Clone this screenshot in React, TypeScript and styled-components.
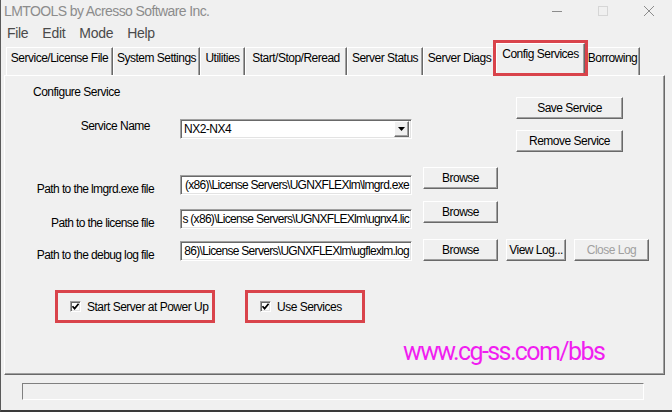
import styled, { createGlobalStyle, css } from "styled-components";

const GlobalStyle = createGlobalStyle`
  html, body {
    margin: 0;
    padding: 0;
    background: #f0f0f0;
  }
  body {
    font-family: "Liberation Sans", Arial, sans-serif;
    font-size: 12px;
    letter-spacing: -0.5px;
    color: #000;
  }
`;

const tabs = [
  { label: "Service/License File", width: 107 },
  { label: "System Settings", width: 87 },
  { label: "Utilities", width: 45 },
  { label: "Start/Stop/Reread", width: 102 },
  { label: "Server Status", width: 76 },
  { label: "Server Diags", width: 73 },
  { label: "Config Services", width: 89, active: true },
  { label: "Borrowing", width: 55 },
];

// path fields are scrolled to their end, so only the tail of each path shows
const paths = [
  {
    label: "Path to the lmgrd.exe file",
    value: "(x86)\\License Servers\\UGNXFLEXlm\\lmgrd.exe",
    space: 15,
    drop: 8,
    logButtons: false,
  },
  {
    label: "Path to the license file",
    value: "s (x86)\\License Servers\\UGNXFLEXlm\\ugnx4.lic",
    space: 5,
    drop: 8,
    logButtons: false,
  },
  {
    label: "Path to the debug log file",
    value: "86)\\License Servers\\UGNXFLEXlm\\ugflexlm.log",
    space: 9,
    drop: 2,
    logButtons: true,
  },
];

const raised = css`
  box-sizing: border-box;
  background: #f0f0f0;
  border-top: 1px solid #fff;
  border-left: 1px solid #fff;
  border-right: 1px solid #696969;
  border-bottom: 1px solid #696969;
  box-shadow: inset -1px -1px #a0a0a0;
`;

const sunken = css`
  box-sizing: border-box;
  background: #fff;
  border-top: 1px solid #a0a0a0;
  border-left: 1px solid #a0a0a0;
  border-right: 1px solid #fff;
  border-bottom: 1px solid #fff;
  box-shadow: inset 1px 1px #696969, inset -1px -1px #e3e3e3;
`;

const Check = () => (
  <svg width="9" height="9" viewBox="0 0 9 9">
    <path d="M1.5 4.2 L3.6 6.6 L7.6 1.8" fill="none" stroke="#000" strokeWidth="1.7" />
  </svg>
);

export default function App() {
  return (
    <>
      <GlobalStyle />
      <Window>
        <TitleBar>
          <Title>LMTOOLS by Acresso Software Inc.</Title>
          <Caption>
            <CaptionButton>
              <svg width="10" height="10" viewBox="0 0 10 10">
                <path d="M0 5.5 H10" stroke="#8c8c8c" strokeWidth="1" />
              </svg>
            </CaptionButton>
            <CaptionButton>
              <svg width="10" height="10" viewBox="0 0 10 10">
                <rect x="0.5" y="0.5" width="9" height="9" fill="none" stroke="#d6d6d6" />
              </svg>
            </CaptionButton>
            <CaptionButton>
              <svg width="10" height="10" viewBox="0 0 10 10">
                <path d="M0 0 L10 10 M10 0 L0 10" stroke="#8c8c8c" strokeWidth="1" />
              </svg>
            </CaptionButton>
          </Caption>
        </TitleBar>

        <MenuBar>
          <MenuItem>File</MenuItem>
          <MenuItem>Edit</MenuItem>
          <MenuItem>Mode</MenuItem>
          <MenuItem>Help</MenuItem>
        </MenuBar>

        <TabStrip>
          {tabs.map((t) => (
            <Tab key={t.label} $w={t.width} $active={t.active}>
              {t.label}
            </Tab>
          ))}
        </TabStrip>

        <Panel>
          <TopSection>
            <TopLeft>
              <Heading>Configure Service</Heading>
              <FieldRow>
                <Label $inset={4}>Service Name</Label>
                <Combo>
                  <ComboText>NX2-NX4</ComboText>
                  <DropButton>
                    <svg width="7" height="4" viewBox="0 0 7 4">
                      <path d="M0 0 H7 L3.5 4 Z" fill="#000" />
                    </svg>
                  </DropButton>
                </Combo>
              </FieldRow>
            </TopLeft>
            <ActionStack>
              <Button $w={107}>Save Service</Button>
              <Button $w={107}>Remove Service</Button>
            </ActionStack>
          </TopSection>

          {paths.map((p) => (
            <PathRow key={p.label} $space={p.space}>
              <PathLabel $drop={p.drop + 7}>{p.label}</PathLabel>
              <PathField $drop={p.drop}>
                <span>{p.value}</span>
              </PathField>
              <ButtonGroup>
                <Button $w={75}>Browse</Button>
                {p.logButtons && (
                  <>
                    <Button $w={60}>View Log...</Button>
                    <Button $w={75} disabled>
                      Close Log
                    </Button>
                  </>
                )}
              </ButtonGroup>
            </PathRow>
          ))}

          <CheckRow>
            <Callout $w={160}>
              <CheckBox>
                <Check />
              </CheckBox>
              <CheckText>Start Server at Power Up</CheckText>
            </Callout>
            <Callout $w={120}>
              <CheckBox>
                <Check />
              </CheckBox>
              <CheckText>Use Services</CheckText>
            </Callout>
          </CheckRow>

          <SiteMark>www.cg-ss.com/bbs</SiteMark>
        </Panel>

        <StatusBar />
      </Window>
    </>
  );
}

const Window = styled.div`
  box-sizing: border-box;
  width: 672px;
  height: 412px;
  overflow: hidden;
  background: #f0f0f0;
  border-left: 1px solid #5a5a5a;
  border-bottom: 2px solid #3a3a3a;
`;

const TitleBar = styled.div`
  height: 22px;
  display: flex;
  align-items: center;
  padding-left: 3px;
`;

const Title = styled.div`
  flex: 1;
  font-size: 14px;
  letter-spacing: -0.6px;
  color: #8c8c8c;
`;

const Caption = styled.div`
  display: flex;
  height: 22px;
`;

const CaptionButton = styled.div`
  width: 46px;
  display: flex;
  align-items: center;
  justify-content: center;
`;

const MenuBar = styled.div`
  height: 22px;
  display: flex;
  align-items: center;
  padding-left: 6px;
  gap: 14px;
`;

const MenuItem = styled.div`
  font-size: 14px;
  letter-spacing: -0.3px;
  color: #4a4a4a;
`;

const TabStrip = styled.div`
  height: 31px;
  display: flex;
  align-items: flex-end;
  padding-left: 5px;
`;

const Tab = styled.div<{ $w: number; $active?: boolean }>`
  ${raised};
  position: relative;
  width: ${(p) => p.$w}px;
  height: ${(p) => (p.$active ? 33 : 28)}px;
  margin-bottom: ${(p) => (p.$active ? -1 : 0)}px;
  padding-top: 3px;
  border-bottom: none;
  box-shadow: inset -1px 0 #a0a0a0;
  line-height: 14px;
  text-align: center;
  white-space: nowrap;
  z-index: ${(p) => (p.$active ? 2 : 1)};

  ${(p) =>
    p.$active &&
    css`
      &::after {
        content: "";
        position: absolute;
        top: -4px;
        left: -4px;
        right: -4px;
        bottom: 0;
        border: 3px solid #d9434b;
      }
    `}
`;

const Panel = styled.div`
  ${raised};
  margin-left: 3px;
  width: 661px;
  height: 300px;
  padding: 9px 0 0 23px;
`;

const TopSection = styled.div`
  display: flex;
  align-items: flex-start;
`;

const TopLeft = styled.div`
  width: 384px;
  display: flex;
  flex-direction: column;
`;

const Heading = styled.div`
  line-height: 14px;
  padding-left: 5px;
`;

const FieldRow = styled.div`
  margin-top: 20px;
  display: grid;
  grid-template-columns: 126px 232px;
  column-gap: 26px;
  align-items: start;
`;

const Label = styled.div<{ $inset?: number }>`
  line-height: 14px;
  text-align: right;
  padding-right: ${(p) => p.$inset ?? 0}px;
  white-space: nowrap;
`;

const Combo = styled.div`
  ${sunken};
  height: 20px;
  display: flex;
  align-items: center;
  padding: 2px 2px 2px 3px;
`;

const ComboText = styled.div`
  flex: 1;
  line-height: 14px;
`;

const DropButton = styled.div`
  ${raised};
  width: 15px;
  height: 16px;
  display: flex;
  align-items: center;
  justify-content: center;
`;

const ActionStack = styled.div`
  margin: 12px 0 0 104px;
  display: flex;
  flex-direction: column;
  gap: 11px;
`;

const Button = styled.button<{ $w: number }>`
  ${raised};
  width: ${(p) => p.$w}px;
  height: 22px;
  padding: 0 0 1px;
  font: inherit;
  letter-spacing: inherit;
  color: #000;
  cursor: default;

  &:disabled {
    color: #a0a0a0;
  }
`;

const PathRow = styled.div<{ $space: number }>`
  margin-top: ${(p) => p.$space}px;
  display: flex;
  align-items: flex-start;
`;

const PathLabel = styled(Label)<{ $drop: number }>`
  width: 126px;
  margin-top: ${(p) => p.$drop}px;
  letter-spacing: -0.6px;
`;

const PathField = styled.div<{ $drop: number }>`
  ${sunken};
  width: 232px;
  height: 20px;
  margin: ${(p) => p.$drop}px 0 0 26px;
  padding: 0 2px 0 1px;
  display: flex;
  justify-content: flex-end;
  align-items: center;
  overflow: hidden;
  white-space: nowrap;
  line-height: 14px;
  letter-spacing: -0.7px;
`;

const ButtonGroup = styled.div`
  margin-left: 11px;
  display: flex;
  gap: 8px;
`;

const CheckRow = styled.div`
  margin: 28px 0 0 27px;
  display: flex;
  gap: 30px;
`;

const Callout = styled.div<{ $w: number }>`
  box-sizing: border-box;
  width: ${(p) => p.$w}px;
  height: 33px;
  border: 3px solid #d9434b;
  padding-left: 12px;
  display: flex;
  align-items: center;
  gap: 6px;
`;

const CheckBox = styled.span`
  ${sunken};
  width: 11px;
  height: 11px;
  display: flex;
  align-items: center;
  justify-content: center;
`;

const CheckText = styled.span`
  line-height: 14px;
`;

const SiteMark = styled.div`
  margin: 15px 0 0 375px;
  font-family: Roboto, "Liberation Sans", sans-serif;
  font-size: 25px;
  letter-spacing: -1.6px;
  line-height: 28px;
  color: #f01ef0;
`;

const StatusBar = styled.div`
  box-sizing: border-box;
  margin: 8px 0 0 21px;
  width: 622px;
  height: 17px;
  border-top: 1px solid #808080;
  border-left: 1px solid #808080;
  border-right: 1px solid #fff;
  border-bottom: 1px solid #fff;
`;
